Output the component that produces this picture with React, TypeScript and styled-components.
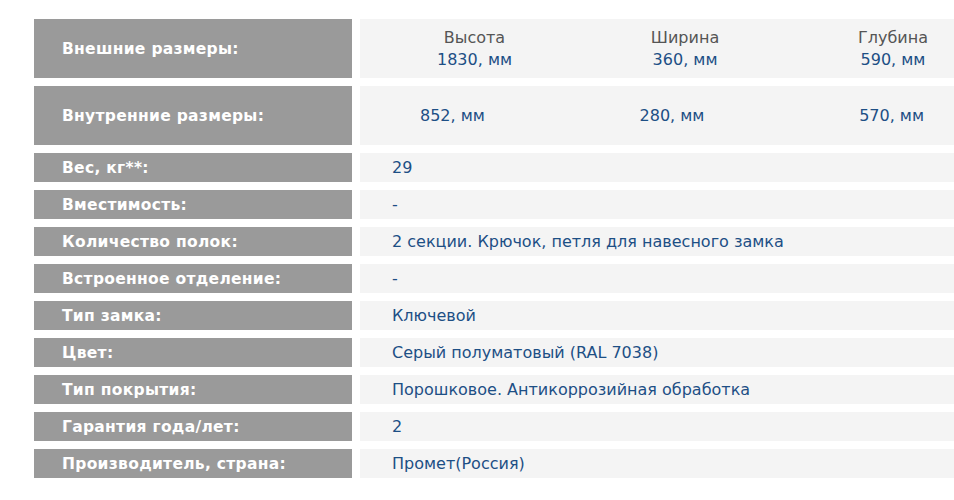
import React from 'react'
import styled, { createGlobalStyle } from 'styled-components'

const GlobalStyle = createGlobalStyle`
  html, body {
    margin: 0;
    padding: 0;
    background: #ffffff;
  }
  body {
    font-family: "DejaVu Sans", Verdana, sans-serif;
  }
`

const Table = styled.div`
  display: flex;
  flex-direction: column;
  gap: 8px;
  padding: 19px 0 0 34px;
`

const Row = styled.div<{ $tall?: boolean }>`
  display: grid;
  grid-template-columns: 318px 1fr;
  column-gap: 8px;
  height: ${p => (p.$tall ? '59px' : '29px')};
`

const Label = styled.div`
  display: flex;
  align-items: center;
  background: #9a9a9a;
  color: #ffffff;
  font-weight: bold;
  font-size: 15.5px;
  padding-left: 28px;
  letter-spacing: 0.3px;
`

const Value = styled.div`
  display: flex;
  align-items: center;
  background: #f4f4f4;
  color: #1d4f85;
  font-size: 16px;
  padding-left: 32px;
`

const Dims = styled.div<{ $pad: string }>`
  display: flex;
  align-items: center;
  justify-content: space-between;
  background: #f4f4f4;
  padding: ${p => p.$pad};
`

const Dim = styled.div`
  display: flex;
  flex-direction: column;
  align-items: center;
  font-size: 16px;
  line-height: 22px;
`

const DimTitle = styled.span`
  color: #555555;
`

const DimValue = styled.span`
  color: #1d4f85;
`

const rows: [string, string][] = [
  ['Вес, кг**:', '29'],
  ['Вместимость:', '-'],
  ['Количество полок:', '2 секции. Крючок, петля для навесного замка'],
  ['Встроенное отделение:', '-'],
  ['Тип замка:', 'Ключевой'],
  ['Цвет:', 'Серый полуматовый (RAL 7038)'],
  ['Тип покрытия:', 'Порошковое. Антикоррозийная обработка'],
  ['Гарантия года/лет:', '2'],
  ['Производитель, страна:', 'Промет(Россия)'],
]

export default function App() {
  return (
    <>
      <GlobalStyle />
      <Table>
        <Row $tall>
          <Label>Внешние размеры:</Label>
          <Dims $pad="0 26px 0 77px">
            <Dim>
              <DimTitle>Высота</DimTitle>
              <DimValue>1830, мм</DimValue>
            </Dim>
            <Dim>
              <DimTitle>Ширина</DimTitle>
              <DimValue>360, мм</DimValue>
            </Dim>
            <Dim>
              <DimTitle>Глубина</DimTitle>
              <DimValue>590, мм</DimValue>
            </Dim>
          </Dims>
        </Row>
        <Row $tall>
          <Label>Внутренние размеры:</Label>
          <Dims $pad="0 30px 0 60px">
            <Dim>
              <DimValue>852, мм</DimValue>
            </Dim>
            <Dim>
              <DimValue>280, мм</DimValue>
            </Dim>
            <Dim>
              <DimValue>570, мм</DimValue>
            </Dim>
          </Dims>
        </Row>
        {rows.map(([label, value]) => (
          <Row key={label}>
            <Label>{label}</Label>
            <Value>{value}</Value>
          </Row>
        ))}
      </Table>
    </>
  )
}
